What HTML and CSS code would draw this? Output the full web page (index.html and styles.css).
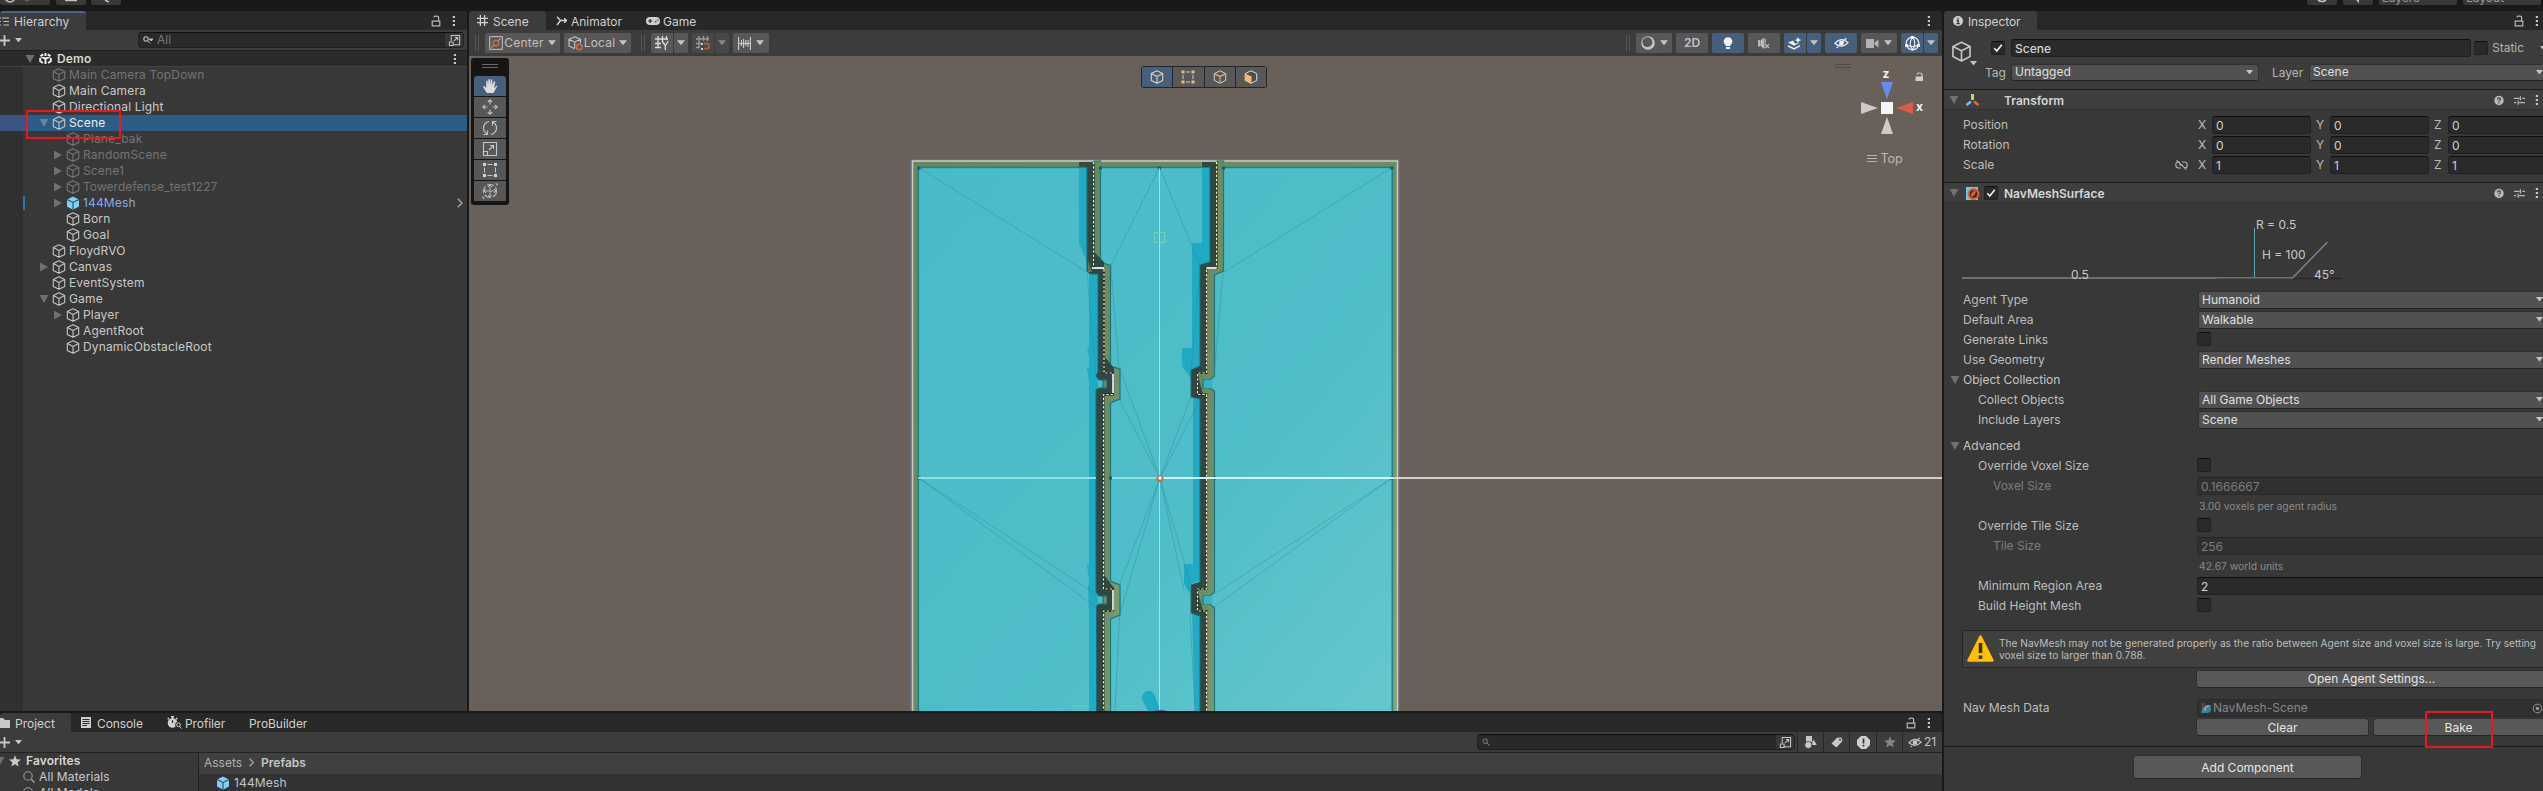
FILE: index.html
```html
<!DOCTYPE html>
<html lang="en">
<head>
<meta charset="utf-8">
<title>Demo - Editor</title>
<link rel="stylesheet" href="styles.css">
</head>
<body>
<svg class="defs" width="0" height="0">
  <symbol id="cube" viewBox="0 0 14 14"><path d="M7 .8 12.7 3.6V10.4L7 13.3 1.3 10.4V3.6ZM1.3 3.6 7 6.5 12.7 3.6M7 6.5V13.3" fill="none" stroke="currentColor" stroke-width="1.1" stroke-linejoin="round"/></symbol>
  <symbol id="prefab" viewBox="0 0 14 14"><path d="M7 .4 13 3.4V10.6L7 13.8 1 10.6V3.4Z" fill="#7fd0f5"/><path d="M1 3.6 7 6.5 13 3.6M7 6.5V13.8" fill="none" stroke="#2f4a5a" stroke-width="1.1"/></symbol>
  <symbol id="down" viewBox="0 0 10 10"><path d="M.6 1H9.4L5 9Z" fill="currentColor"/></symbol>
  <symbol id="right" viewBox="0 0 10 10"><path d="M1 .6V9.4L9 5Z" fill="currentColor"/></symbol>
  <symbol id="drop" viewBox="0 0 8 5"><path d="M0 0H8L4 5Z" fill="currentColor"/></symbol>
  <symbol id="dots" viewBox="0 0 4 12"><path d="M.8 1h2.2v2H.8ZM.8 5h2.2v2H.8ZM.8 9h2.2v2H.8Z" fill="currentColor"/></symbol>
  <symbol id="lock" viewBox="0 0 10 12"><path d="M1.2 6.2H8.8V10.8H1.2ZM7.6 6V2.6Q7.6 1.2 6 1.2H4.4Q3 1.2 3 2.6" fill="none" stroke="currentColor" stroke-width="1.2"/></symbol>
  <symbol id="plus" viewBox="0 0 11 11"><path d="M5.5 0V11M0 5.5H11" stroke="currentColor" stroke-width="1.8"/></symbol>
  <symbol id="expand" viewBox="0 0 14 14"><path d="M3.5 7.5V1.5H12.5V11.5H6M1.5 8.5H5.5V12.5H1.5ZM6.5 7.5 10.3 3.9M7.4 3.7H10.5V6.8" fill="none" stroke="currentColor" stroke-width="1.1"/></symbol>
  <symbol id="mag" viewBox="0 0 10 10"><circle cx="4" cy="4" r="2.7" fill="none" stroke="currentColor" stroke-width="1.3"/><path d="M6 6 9.3 9.3" stroke="currentColor" stroke-width="1.5"/></symbol>
  <symbol id="lens" viewBox="0 0 12 12"><circle cx="5" cy="5" r="4.2" fill="none" stroke="currentColor" stroke-width="1.1"/><path d="M8.2 8.2 11.5 11.5" stroke="currentColor" stroke-width="1.6"/></symbol>
  <symbol id="eyeoff" viewBox="0 0 16 12"><path d="M1 6.4Q7.5-1 15 5.6 8.5 12.5 1 6.4ZM3 11.3 13.2.8" fill="none" stroke="currentColor" stroke-width="1.4"/><circle cx="8" cy="5.9" r="2.6" fill="currentColor"/></symbol>
  <symbol id="star" viewBox="0 0 12 12"><path d="M6 .3 7.6 4.3 11.9 4.6 8.6 7.4 9.7 11.6 6 9.3 2.3 11.6 3.4 7.4.1 4.6 4.4 4.3Z" fill="currentColor"/></symbol>
  <symbol id="help" viewBox="0 0 11 11"><circle cx="5.5" cy="5.5" r="5.2" fill="currentColor"/><path d="M3.8 4.3Q3.8 2.6 5.5 2.6 7.2 2.6 7.2 4.1 7.2 5 5.5 5.8V6.7M5.5 7.5V8.9" fill="none" stroke="#3c3c3c" stroke-width="1.2"/></symbol>
  <symbol id="preset" viewBox="0 0 12 11"><path d="M0 3.2H6M9 3.2H12M0 7.8H2.5M5.5 7.8H12M7 .8V5.6M4.6 5.4V10.2" stroke="currentColor" stroke-width="1.3"/></symbol>
  <symbol id="check" viewBox="0 0 10 10"><path d="M1.3 5.2 3.8 8 8.8 1.8" fill="none" stroke="currentColor" stroke-width="1.7"/></symbol>
  <symbol id="grid" viewBox="0 0 12 12"><path d="M3.7 0V12M8.3 0V12M0 3.7H12M0 8.3H12" stroke="currentColor" stroke-width="1.4"/></symbol>
</svg>

<div class="app">
  <header class="topbar">
    <div class="tb tb-a"><svg width="32" height="3"><circle cx="10" cy="-3" r="5" fill="none" stroke="#c4c4c4" stroke-width="1.6"/><path d="M24 0h6l-3 1.5z" fill="#666"/></svg></div>
    <div class="tb tb-b"><svg width="14" height="3"><path d="M1 0H13" stroke="#c4c4c4" stroke-width="2.4"/></svg></div>
    <div class="tb tb-c"><svg width="10" height="3"><path d="M4 0l4 2" stroke="#c4c4c4" stroke-width="1.5"/></svg></div>
    <div class="tb tb-d"><svg width="12" height="4"><path d="M2 0Q6 3 10 0" fill="none" stroke="#c4c4c4" stroke-width="1.6"/></svg></div>
    <div class="tb tb-e"><svg width="8" height="4"><path d="M2 0l3 3V0" fill="#c4c4c4"/></svg></div>
    <div class="tb tb-f"><span>Layers</span></div>
    <div class="tb tb-g"><span>Layout</span></div>
  </header>

  <div class="work">
    <div class="leftside">
      <div class="upper">
        <section class="hierarchy">
          <div class="tabs">
            <div class="tab on focus tab-hier"><svg width="9" height="9" viewBox="0 0 9 9"><path d="M0 1H1M0 4.5H1M0 8H1M2 1H9M3.5 4.5H9M3.5 8H9" stroke="#c4c4c4" stroke-width="1.1"/></svg><span>Hierarchy</span></div>
            <div class="tabtools"><svg class="i-lock"><use href="#lock"/></svg><svg class="i-dots"><use href="#dots"/></svg></div>
          </div>
          <div class="bar hbar">
            <svg class="i-plus"><use href="#plus"/></svg><svg class="i-drop"><use href="#drop"/></svg>
            <div class="search hsearch"><svg width="10" height="8" viewBox="0 0 10 8"><circle cx="3" cy="3" r="2.2" fill="none" stroke="#c4c4c4" stroke-width="1.1"/><path d="M4.6 4.6 7 7.4M6.4 3H10L8.2 5Z" stroke="#c4c4c4" stroke-width=".9" fill="#c4c4c4"/></svg><span>All</span><div class="sx"><svg><use href="#expand"/></svg></div></div>
          </div>
          <div class="tree">
            <div class="row head"><svg class="ar"><use href="#down"/></svg><svg class="ic white" viewBox="0 0 14 14"><path d="M7 1.2V4.2M7 7.4V13M7 7.4 1.8 4.4M7 7.4 12.2 4.4M1.3 6.5V10L4.3 11.9M12.7 6.5V10L9.7 11.9M1.6 4.4 4.6 2.5M12.4 4.4 9.4 2.5" fill="none" stroke="currentColor" stroke-width="2.1"/></svg><b>Demo</b><svg class="i-dots"><use href="#dots"/></svg></div>
            <div class="row d1 off"><svg class="ar"></svg><svg class="ic"><use href="#cube"/></svg><span>Main Camera TopDown</span></div>
            <div class="row d1"><svg class="ar"></svg><svg class="ic"><use href="#cube"/></svg><span>Main Camera</span></div>
            <div class="row d1"><svg class="ar"></svg><svg class="ic"><use href="#cube"/></svg><span>Directional Light</span></div>
            <div class="row d1 sel"><svg class="ar"><use href="#down"/></svg><svg class="ic"><use href="#cube"/></svg><span>Scene</span><i class="mark mark-scene"></i></div>
            <div class="row d2 off"><svg class="ar"></svg><svg class="ic"><use href="#cube"/></svg><span>Plane_bak</span></div>
            <div class="row d2 off"><svg class="ar"><use href="#right"/></svg><svg class="ic"><use href="#cube"/></svg><span>RandomScene</span></div>
            <div class="row d2 off"><svg class="ar"><use href="#right"/></svg><svg class="ic"><use href="#cube"/></svg><span>Scene1</span></div>
            <div class="row d2 off"><svg class="ar"><use href="#right"/></svg><svg class="ic"><use href="#cube"/></svg><span class="snug">Towerdefense_test1227</span></div>
            <div class="row d2 pre"><svg class="ar"><use href="#right"/></svg><svg class="ic"><use href="#prefab"/></svg><span>144Mesh</span><svg class="open" viewBox="0 0 6 10"><path d="M.8.8 5 5 .8 9.2" fill="none" stroke="#a0a0a0" stroke-width="1.5"/></svg></div>
            <div class="row d2"><svg class="ar"></svg><svg class="ic"><use href="#cube"/></svg><span>Born</span></div>
            <div class="row d2"><svg class="ar"></svg><svg class="ic"><use href="#cube"/></svg><span>Goal</span></div>
            <div class="row d1"><svg class="ar"></svg><svg class="ic"><use href="#cube"/></svg><span>FloydRVO</span></div>
            <div class="row d1"><svg class="ar"><use href="#right"/></svg><svg class="ic"><use href="#cube"/></svg><span>Canvas</span></div>
            <div class="row d1"><svg class="ar"></svg><svg class="ic"><use href="#cube"/></svg><span>EventSystem</span></div>
            <div class="row d1"><svg class="ar"><use href="#down"/></svg><svg class="ic"><use href="#cube"/></svg><span>Game</span></div>
            <div class="row d2"><svg class="ar"><use href="#right"/></svg><svg class="ic"><use href="#cube"/></svg><span>Player</span></div>
            <div class="row d2"><svg class="ar"></svg><svg class="ic"><use href="#cube"/></svg><span>AgentRoot</span></div>
            <div class="row d2"><svg class="ar"></svg><svg class="ic"><use href="#cube"/></svg><span>DynamicObstacleRoot</span></div>
          </div>
        </section>

        <section class="scene">
          <div class="tabs">
            <div class="tab on tab-scene"><svg width="11" height="11"><use href="#grid"/></svg><span>Scene</span></div>
            <div class="tab tab-anim"><svg width="11" height="10" viewBox="0 0 11 10"><path d="M1 .8 4.5 4.5 1 9M4.5 4.5H10.5M8.3 2.4 10.5 4.5 8.3 6.8" fill="none" stroke="#d0d0d0" stroke-width="1.5"/></svg><span>Animator</span></div>
            <div class="tab tab-game"><svg width="14" height="8" viewBox="0 0 14 8"><rect width="14" height="8" rx="4" fill="#d0d0d0"/><path d="M2.2 4H6.2M4.2 2V6M9 4.6h1.5M11 3h1.5" stroke="#282828" stroke-width="1.2"/></svg><span>Game</span></div>
            <div class="tabtools"><svg class="i-dots"><use href="#dots"/></svg></div>
          </div>
          <div class="bar sbar">
            <i class="grip"></i>
            <div class="btn w75"><svg width="14" height="14" viewBox="0 0 14 14"><path d="M.7.7H13.3V13.3H.7ZM2.5 11.5 5 9M9 5 11.5 2.5" fill="none" stroke="#c8c8c8"/><circle cx="7" cy="7" r="2.8" fill="none" stroke="#d9683f" stroke-width="1.4"/></svg><span>Center</span><svg class="i-drop big"><use href="#drop"/></svg></div>
            <div class="btn w67"><svg width="15" height="15" viewBox="0 0 15 15"><path d="M6.7.8 12.5 3.3V7M6.7 12.7 1 10V3.3L6.7.8M1 3.3 6.7 6 12.5 3.3M6.7 6V12" fill="none" stroke="#c8c8c8" stroke-width="1.1"/><circle cx="11.3" cy="11" r="2.8" fill="none" stroke="#d9683f" stroke-width="1.4"/></svg><span>Local</span><svg class="i-drop big"><use href="#drop"/></svg></div>
            <i class="grip g2"></i>
            <div class="btn w22"><svg width="14" height="14" viewBox="0 0 14 14"><path d="M3 0V12M7.5 0V5M11.5 0V4M0 3H13M0 7.5H6M0 11.5H6M7 5 10.3 9.5 13.3 5M10.3 9.5V14" fill="none" stroke="#dadada" stroke-width="1.3"/></svg></div>
            <div class="btn w14"><svg class="i-drop big"><use href="#drop"/></svg></div>
            <div class="btn w22 dis"><svg width="14" height="14" viewBox="0 0 14 14"><path d="M3 0V12M7.5 0V5M11.5 0V5M0 3H13M0 7.5H6M0 11.5H4" fill="none" stroke="#999" stroke-width="1.3"/><path d="M8 7.5H10.5Q13 7.5 13 10 13 12.6 10.5 12.6H8" fill="none" stroke="#a85f48" stroke-width="1.8"/><path d="M5 7h2v2H5ZM5 12h2v2H5Z" fill="#ccc"/></svg></div>
            <div class="btn w14 dis"><svg class="i-drop big dim"><use href="#drop"/></svg></div>
            <div class="btn w36"><svg width="13" height="13" viewBox="0 0 13 13"><path d="M.6 0V13M12.4 0V13M0 6.5H13M3.4 3V9M5.6 2V11M7.8 3V9M10 3V10" stroke="#cecece" stroke-width="1.1"/></svg><svg class="i-drop big"><use href="#drop"/></svg></div>
            <i class="grip g3"></i>
            <div class="btn w36"><svg width="14" height="14" viewBox="0 0 14 14"><circle cx="7" cy="7" r="6.8" fill="#c4c4c4"/><circle cx="6.400" cy="6.200" r="4.900" fill="#575757"/></svg><svg class="i-drop big"><use href="#drop"/></svg></div>
            <div class="btn w32"><b>2D</b></div>
            <div class="btn w32 blue"><svg width="10" height="13" viewBox="0 0 10 13"><path d="M5 .3A4.2 4.2 0 0 1 7.4 8V9H2.6V8A4.2 4.2 0 0 1 5 .3M3 10H7V12H3Z" fill="#f0f0f0"/></svg></div>
            <div class="btn w32"><svg width="12" height="11" viewBox="0 0 12 11"><path d="M0 2.5H2V8H0ZM3 2.5 6 0V10.5L3 8ZM7.5 1V5" fill="#bbb" stroke="#bbb" stroke-width=".8"/><path d="M7 6 11 10M11 6 7 10" stroke="#bbb" stroke-width="1.1"/></svg></div>
            <div class="btn w22 blue"><svg width="14" height="13" viewBox="0 0 14 13"><path d="M0 5.5 5 3.5 7 6.5 11.5 6 6 8.8ZM0 8 6 11 12 8V9.5L6 12.7 0 9.7Z" fill="#eee"/><path d="M10 0 11 2.2 13.5 3 11 4 10 6 9 4 6.8 3 9 2.2Z" fill="#fff"/></svg></div>
            <div class="btn w14 blue"><svg class="i-drop big"><use href="#drop"/></svg></div>
            <div class="btn w32 blue"><svg width="15" height="12" class="lt"><use href="#eyeoff"/></svg></div>
            <div class="btn w36"><svg width="13" height="9" viewBox="0 0 13 9"><path d="M0 0H8V9H0ZM8.5 3.5 12.5.5V8.5L8.5 5.5Z" fill="#b4b4b4"/></svg><svg class="i-drop big"><use href="#drop"/></svg></div>
            <div class="btn w22 blue"><svg width="15" height="15" viewBox="0 0 15 15"><circle cx="7.5" cy="7.5" r="6.3" fill="none" stroke="#eee" stroke-width="1.2"/><path d="M7.5 1Q3 7 7.5 14 12 7 7.5 1M1.5 9Q7.5 12 13.5 9" fill="none" stroke="#eee" stroke-width="1.1"/><path d="M6 0h3v3H6ZM0 8h3v3H0ZM12 8h3v3h-3Z" fill="#fff"/></svg></div>
            <div class="btn w14 blue last"><svg class="i-drop big"><use href="#drop"/></svg></div>
          </div>

          <div class="view">
            <svg class="mesh" viewBox="469 56 1473 655">
              <defs>
                <linearGradient id="sea" x1="0" y1="0" x2="1" y2="1"><stop offset="0" stop-color="#49bbc8"/><stop offset=".6" stop-color="#4fbec9"/><stop offset="1" stop-color="#68c7ce"/></linearGradient>
                <linearGradient id="grass" x1="0" y1="0" x2="1" y2="1"><stop offset="0" stop-color="#67885f"/><stop offset=".6" stop-color="#6d8e66"/><stop offset="1" stop-color="#86a479"/></linearGradient>
              </defs>
              <rect x="911" y="159.5" width="488" height="560" fill="none" stroke="#5d6f94" stroke-width="1.2"/>
              <rect x="912.5" y="161" width="485" height="560" fill="url(#grass)" stroke="#c9c9c4" stroke-width="1.6"/>
              <rect x="918.3" y="167.4" width="474" height="560" fill="url(#sea)" stroke="#1f8189" stroke-width="1.6"/>
              <!-- cast shadows on the water -->
              <g fill="#1fabc4">
                <path d="M1079 168H1087V262L1079 243Z"/>
                <path d="M1089 274H1098V720H1089V610L1088 585H1089V580L1087 565H1089V382L1087 368H1089V356L1087 348H1089Z"/>
                <path d="M1202 168H1211V262L1200 272V368L1192 372V380L1182 366V348H1192V243H1202Z"/>
                <path d="M1193 396H1201V580L1190 584V594L1184 584V564H1193ZM1192 612H1201V720H1195Z"/>
                <path d="M1143 701A6.500 6.500 0 1 1 1154 694L1161 711H1148Z"/>
              </g>
              <!-- left wall -->
              <path d="M1094 161H1100.500V262L1110.500 265.500V366L1120 369V399L1110.500 403V581L1120 585V615L1110.500 619V720H1103V268H1094Z" fill="url(#grass)" stroke="#1f7479" stroke-width="1.2"/>
              <path d="M1079 162H1094V167H1079Z" fill="#354b43"/>
              <path d="M1087 167H1094V252L1104 262V356L1114 368V395H1104V575L1114 588V612H1104V720H1096.500V606L1099 604H1107V596H1099L1096 592V390L1099 388H1107V380H1099L1096 376 1098 372V274H1090L1087 271Z" fill="#2f4844"/>
              <path d="M1087 167V271L1090 274H1098V372L1096 376 1099 380H1107V388H1099L1096 390V592L1099 596H1107V604H1099L1096.500 606V711" fill="none" stroke="#1d6a70" stroke-width="1"/>
              <path d="M1088 260 1092 272H1088Z" fill="#5e7450"/>
              <rect x="1094.500" y="161.800" width="7" height="6" fill="#69895f"/>
              <!-- right wall -->
              <path d="M1217 161H1223.500V271L1214.500 275V376L1210 380H1203V388H1210L1214.500 391V592L1210 596H1203V604H1210L1214.500 608V720H1206V612L1197 609V590L1206 586V396L1197 394V373L1206 368V268L1217 266Z" fill="url(#grass)" stroke="#1f7479" stroke-width="1.2"/>
              <rect x="1217.500" y="161.800" width="7" height="6" fill="#69895f"/>
              <path d="M1202 162H1217V268H1206.500V373H1197L1203 394H1206.500V589H1197L1203 611H1206.500V720H1200V616L1191 613V585L1200 582V399L1191 397V370L1200 366V265L1210 262V167H1202Z" fill="#2f4844"/>
              <path d="M1210 167V262L1200 265V366L1191 370V397L1200 399V582L1191 585V613L1200 616V711" fill="none" stroke="#1d6a70" stroke-width="1"/>
              <path d="M1204 380H1212V388H1204ZM1204 596H1212V604H1204Z" fill="#37b3c4"/>
              <g fill="none" stroke="#16211f" stroke-width="1.800">
                <path d="M1093.500 162V268H1104V373H1113V394.500H1103.500V589H1113V611H1103.500V711"/>
                <path d="M1216.500 162V268H1206.500V373H1197.500V394.500H1206.500V589H1197.500V611H1206.500V711"/>
              </g>
              <g fill="none" stroke="#f2e6b4" stroke-width="1.200" stroke-dasharray="2.600 1.600">
                <path d="M1093.500 162V268H1104V373H1113V394.500H1103.500V589H1113V611H1103.500V711"/>
                <path d="M1216.500 162V268H1206.500V373H1197.500V394.500H1206.500V589H1197.500V611H1206.500V711"/>
              </g>
              <path d="M1092 268H1104.500M1113 374V393M1113 590V610M1206.500 268H1216" stroke="#e4dcdc" stroke-width="1.800"/>
              <path d="M1207.800 275V372M1207.800 396V588M1207.800 612V711" stroke="#8a8298" stroke-width="1"/>
              <!-- triangulation -->
              <g fill="none" stroke="#218c99" stroke-opacity=".42" stroke-width="1">
                <path d="M918.500 167.500 1087 272M1392 167.500 1224 272M1159.500 167.500 1110.500 266M1159.500 167.500 1200 265M1111 268 1119 369M1087 272 1096 375M1223 272 1214 376M1119.500 369 1160 478M1119.500 400 1160 478M1191 397 1160 478M1200 400 1160 478M1200 270 1191 370"/>
                <path d="M918.500 478 1096 594M918.500 478 1096 607M1392 478 1214 594M1392 478 1214 607M1160 478 1119.500 585M1160 478 1119.500 615M1160 478 1191 586M1160 478 1184 590M1119.500 616 1115 711M1190 614 1195 711"/>
              </g>
              <g fill="#145f66"><path d="M917.500 166.500h3v3h-3zM1390.500 166.500h3v3h-3zM1158 166.500h3v3h-3zM1099 166.500h3v3h-3zM1222 166.500h3v3h-3zM917.500 476.500h3v3h-3zM1390.500 476.500h3v3h-3zM1109 476.500h3v3h-3zM1213 476.500h3v3h-3z"/></g>
              <path d="M1159.500 168V711" stroke="#b9edec" stroke-opacity=".75" stroke-width="1"/>
              <path d="M918 478H1096M1112 478H1160" stroke="#8fe0e2" stroke-width="1.800"/>
              <path d="M1160 478H1393" stroke="#c9f6f4" stroke-width="2"/>
              <path d="M1393 478H1942" stroke="#d3d1c9" stroke-width="2"/>
              <rect x="1154.500" y="232.500" width="10" height="10" fill="none" stroke="#6fd3bd" stroke-width="1"/>
              <circle cx="1160" cy="478.500" r="3.500" fill="#c4694d"/><circle cx="1160" cy="478" r="1.700" fill="#fff"/>
              <path d="M1155 710.500h10" stroke="#55639a" stroke-width="1"/>
              <!-- orientation gizmo -->
              <path d="M1835 64.500H1851M1835 67.500H1851" stroke="#524c48" stroke-width="1"/>
              <path d="M1881 82H1893L1887 99Z" fill="#668cf0"/>
              <path d="M1861 102V114L1878 108Z" fill="#cdcbc9"/>
              <path d="M1896 108 1913 102V114Z" fill="#dd5949"/>
              <path d="M1887 117 1893 134H1881Z" fill="#cdcbc9"/>
              <rect x="1881" y="102" width="12" height="12" fill="#f5f5f5"/>
              <text x="1882.500" y="77.500" class="ax">z</text><text x="1916" y="111" class="ax">x</text>
              <path d="M1915.500 76.500H1923V81H1915.500Z" fill="#d0cecb"/><path d="M1917 74.500Q1917 73 1919.500 73 1922 73 1922 75V77" fill="none" stroke="#d0cecb" stroke-width="1.100"/>
              <path d="M1867 155.500H1877M1867 158.500H1877M1867 161.500H1877" stroke="#b9b4b0" stroke-width="1"/>
              <text x="1880.500" y="163" class="top">Top</text>
            </svg>
            <div class="tools">
              <i></i>
              <div class="tool blue"><svg viewBox="0 0 16 16"><path d="M5 15Q2.500 12 1 8.500L2.200 8 4.200 10V3Q5 2 5.600 3L6 7 6.400 1.500Q7.200.5 8 1.500V7L9 1.500Q9.800.8 10.400 1.800L10.200 7.500 12 3.300Q13 2.800 13.300 3.800L12 10.500 14.500 7.500Q15.500 7.600 15 8.500L11.500 15Z" fill="#dcdcdc"/></svg></div>
              <div class="tool"><svg viewBox="0 0 16 16"><path d="M8 1V5.500M8 10.500V15M1 8H5.500M10.500 8H15M5.800 3 8 .8 10.200 3M5.800 13 8 15.200 10.200 13M3 5.800.8 8 3 10.200M13 5.800 15.200 8 13 10.200" fill="none" stroke="#bdbdbd" stroke-width="1.200"/></svg></div>
              <div class="tool"><svg viewBox="0 0 16 16"><path d="M5.500 14Q1.500 12 1.500 8 1.500 3 7 1.500M10.500 2Q14.500 4 14.500 8 14.500 13 9 14.500M10.500 5.500V1.500H14.500M5.500 10.500V14.500H1.500" fill="none" stroke="#c6c6c6" stroke-width="1.200"/></svg></div>
              <div class="tool"><svg viewBox="0 0 16 16"><path d="M1.500 1.500H14.500V14.500H1.500ZM1.500 10.500H5.500V14.500M7 9 11.500 4.500M8 4.500H11.500V8" fill="none" stroke="#c6c6c6" stroke-width="1.100"/></svg></div>
              <div class="tool"><svg viewBox="0 0 16 16"><path d="M1 1h3v3H1zM12 1h3v3h-3zM1 12h3v3H1zM12 12h3v3h-3z" fill="#d4d4d4"/><path d="M5.500 2.500H10.500M5.500 13.500H10.500M2.500 5.500V10.500M13.500 5.500V10.500" stroke="#c6c6c6"/></svg></div>
              <div class="tool"><svg viewBox="0 0 16 16"><circle cx="8" cy="8" r="6.500" fill="none" stroke="#b8b8b8" stroke-width="1.200" stroke-dasharray="7 2"/><path d="M8 2V14M2 8H14M6 4 8 2 10 4M6 12 8 14 10 12M4 6 2 8 4 10M12 6 14 8 12 10" fill="none" stroke="#b8b8b8"/><path d="M13 .5h2.500V3zM.5 13v2.500H3z" fill="#c4c4c4"/></svg></div>
            </div>
            <div class="modes">
              <div class="mode blue"><svg class="tan"><use href="#cube"/></svg></div>
              <div class="mode"><svg viewBox="0 0 14 14"><path d="M5 2H9M5 12H9M2 5V9M12 5V9" stroke="#ccc"/><path d="M.5.500h3v3h-3zM10.500.500h3v3h-3zM.5 10.500h3v3h-3zM10.500 10.500h3v3h-3z" fill="#f3b877"/></svg></div>
              <div class="mode"><svg viewBox="0 0 14 14"><path d="M1.300 3.600V10.400L7 13.300 12.700 10.400V3.600" fill="none" stroke="#ccc"/><path d="M7 .8 12.700 3.600 7 6.500 1.300 3.600Z" fill="none" stroke="#ccc"/><path d="M1.300 3.600 7 6.500 12.700 3.600M7 6.500V13" fill="none" stroke="#e0a468" stroke-width="1.200"/></svg></div>
              <div class="mode"><svg viewBox="0 0 14 14"><path d="M7 .8 12.700 3.600V10.400L7 13.300 1.300 10.400V3.600Z" fill="#4d4d4d" stroke="#ddd"/><path d="M.8 3.500 7.500 6.500V13.800L.8 10.600Z" fill="#f9b66d"/></svg></div>
            </div>
          </div>
        </section>
      </div>

      <section class="project">
        <div class="tabs">
          <div class="tab on tab-proj"><svg width="10" height="10" viewBox="0 0 10 10"><path d="M0 0H3L5 2H10V10H0Z" fill="#c8c8c8"/></svg><span>Project</span></div>
          <div class="tab tab-cons"><svg width="10" height="11" viewBox="0 0 10 11"><rect width="10" height="11" fill="#cfcfcf"/><path d="M1.500 2.500H8.500M1.500 4.500H8.500M1.500 6.500H8.500M1.500 8.500H6" stroke="#282828"/></svg><span>Console</span></div>
          <div class="tab tab-prof"><svg width="15" height="13" viewBox="0 0 15 13"><circle cx="5.500" cy="7" r="4.800" fill="#cfcfcf"/><path d="M4 .8H7M5.500 1V3M9 2l1.300 1.300M1.900 2 .8 3.200" stroke="#cfcfcf" stroke-width="1.500"/><path d="M5.500 7V4.200" stroke="#282828" stroke-width="1.200"/><circle cx="11.500" cy="9" r="3.300" fill="#282828"/><circle cx="11.500" cy="8.800" r="1.900" fill="none" stroke="#cfcfcf"/><path d="M12.500 10.500 14.500 12.500" stroke="#cfcfcf"/></svg><span>Profiler</span></div>
          <div class="tab tab-pb"><span>ProBuilder</span></div>
          <div class="tabtools"><svg class="i-lock"><use href="#lock"/></svg><svg class="i-dots"><use href="#dots"/></svg></div>
        </div>
        <div class="bar pbar">
          <svg class="i-plus"><use href="#plus"/></svg><svg class="i-drop"><use href="#drop"/></svg>
          <div class="search psearch"><svg width="8" height="8"><use href="#mag"/></svg><div class="sx"><svg><use href="#expand"/></svg></div></div>
          <div class="pb w25"><svg width="13" height="13" viewBox="0 0 13 13"><path d="M2 0H8V6H2Z" fill="#c8c8c8"/><circle cx="4.300" cy="9" r="3.600" fill="#c8c8c8" stroke="#3c3c3c" stroke-width=".8"/><path d="M9.500 3.500 12.800 9H8.200V6.800Z" fill="#c8c8c8"/></svg></div>
          <div class="pb w26"><svg width="12" height="11" viewBox="0 0 12 11"><path d="M.5 6.500 6 .8 10.500.5 11.500 4 5.500 10.500Z" fill="#c8c8c8"/><circle cx="9" cy="2.800" r="1" fill="#3c3c3c"/></svg></div>
          <div class="pb w27"><svg width="13" height="13" viewBox="0 0 13 13"><path d="M4 0H9L13 4V9L9 13H4L0 9V4Z" fill="#cfcfcf"/><path d="M6.500 2.500V7.500M6.500 8.800V10.600" stroke="#333" stroke-width="1.700"/></svg></div>
          <div class="pb w26b"><svg width="12" height="12" class="dim"><use href="#star"/></svg></div>
          <div class="pb rest"><svg width="14" height="11"><use href="#eyeoff"/></svg><span>21</span></div>
        </div>
        <div class="pbody">
          <div class="favs">
            <div class="fav"><svg class="ar"><use href="#down"/></svg><svg width="12" height="12"><use href="#star"/></svg><b>Favorites</b></div>
            <div class="fav sub"><svg class="fm"><use href="#lens"/></svg><span>All Materials</span></div>
            <div class="fav sub"><svg class="fm"><use href="#lens"/></svg><span>All Models</span></div>
          </div>
          <div class="assets">
            <div class="crumbs"><span>Assets</span><svg width="5" height="9" viewBox="0 0 5 9"><path d="M.7.700 4.300 4.500.7 8.300" fill="none" stroke="#a0a0a0" stroke-width="1.300"/></svg><b>Prefabs</b></div>
            <div class="asset"><svg width="14" height="14"><use href="#prefab"/></svg><span>144Mesh</span></div>
          </div>
        </div>
      </section>
    </div>

    <section class="inspector">
      <div class="tabs">
        <div class="tab on tab-insp"><svg width="10" height="10" viewBox="0 0 10 10"><circle cx="5" cy="5" r="5" fill="#cfcfcf"/><path d="M5 1.800V3.300M3.700 4.500H5.200V7.500M3.500 7.700H6.700" stroke="#333" stroke-width="1.300" fill="none"/></svg><span>Inspector</span></div>
        <div class="tabtools"><svg class="i-lock"><use href="#lock"/></svg><svg class="i-dots"><use href="#dots"/></svg></div>
      </div>
      <div class="ohead">
        <div class="bigcube"><svg width="21" height="21"><use href="#cube"/></svg><svg class="i-drop"><use href="#drop"/></svg></div>
        <div class="olines">
          <div class="oline"><div class="cb c1"><svg><use href="#check"/></svg></div><div class="field name">Scene</div><div class="cb"></div><span class="st">Static</span><svg class="i-drop"><use href="#drop"/></svg></div>
          <div class="oline l2"><label>Tag</label><div class="dd tag"><span>Untagged</span><svg class="i-drop"><use href="#drop"/></svg></div><label class="lay">Layer</label><div class="dd layer"><span>Scene</span><svg class="i-drop"><use href="#drop"/></svg></div></div>
        </div>
      </div>

      <div class="chead"><svg class="ar"><use href="#down"/></svg><svg class="cic" width="13" height="13" viewBox="0 0 13 13"><path d="M6.500 0V6" stroke="#b5e853" stroke-width="2.800"/><path d="M5 7.500.5 11" stroke="#6ec1ea" stroke-width="2.600"/><path d="M8 7.500 12.500 11" stroke="#e0663c" stroke-width="2.600"/></svg><b>Transform</b><div class="cright"><svg class="i-help"><use href="#help"/></svg><svg class="i-pre"><use href="#preset"/></svg><svg class="i-dots"><use href="#dots"/></svg></div></div>
      <div class="xform">
        <div class="vec"><label>Position</label><em></em><s>X</s><div class="field">0</div><s>Y</s><div class="field">0</div><s>Z</s><div class="field">0</div></div>
        <div class="vec"><label>Rotation</label><em></em><s>X</s><div class="field">0</div><s>Y</s><div class="field">0</div><s>Z</s><div class="field">0</div></div>
        <div class="vec"><label>Scale</label><em><svg width="13" height="10" viewBox="0 0 13 10"><path d="M5 2H3.500Q.8 2 .8 5 .8 8 3.500 8H6M7 2H9.500Q12.200 2 12.200 5 12.200 8 9.500 8M1.500.3 11.500 9.700M4 5H8" fill="none" stroke="#b4b4b4" stroke-width="1.100"/></svg></em><s>X</s><div class="field">1</div><s>Y</s><div class="field">1</div><s>Z</s><div class="field">1</div></div>
      </div>

      <div class="chead"><svg class="ar"><use href="#down"/></svg><svg class="cic nav" width="14" height="13" viewBox="0 0 14 13"><path d="M0 0H12V13H0Z" fill="#7ac5e6"/><circle cx="7.500" cy="7" r="6" fill="#dd6034"/><circle cx="7.500" cy="7" r="3.800" fill="#3c2a26"/><path d="M4.800 10Q4.500 5 9.500 3.300 10.500 8.500 4.800 10" fill="#dd6034"/></svg><div class="cb c2"><svg><use href="#check"/></svg></div><b>NavMeshSurface</b><div class="cright"><svg class="i-help"><use href="#help"/></svg><svg class="i-pre"><use href="#preset"/></svg><svg class="i-dots"><use href="#dots"/></svg></div></div>
      <svg class="agent" viewBox="1944 203 599 87">
        <path d="M1962 278H2292" stroke="#6f6f6f" stroke-width="2"/><path d="M2217 278.500H2292" stroke="#555" stroke-width="1"/>
        <path d="M2292 278.500H2342" stroke="#292929" stroke-width="1.500"/>
        <path d="M2292 278.500 2327.500 242" stroke="#808080" stroke-width="1.500"/>
        <path d="M2254.500 228V277" stroke="#5da3b5" stroke-width="1"/>
        <text x="2256" y="228.500">R = 0.5</text><text x="2262" y="258.500">H = 100</text><text x="2071" y="278.500">0.5</text><text x="2314" y="278.500">45°</text>
      </svg>
      <div class="props">
        <div class="p"><label>Agent Type</label><div class="dd"><span>Humanoid</span><svg class="i-drop"><use href="#drop"/></svg></div></div>
        <div class="p"><label>Default Area</label><div class="dd"><span>Walkable</span><svg class="i-drop"><use href="#drop"/></svg></div></div>
        <div class="p"><label>Generate Links</label><div class="cb"></div></div>
        <div class="p"><label>Use Geometry</label><div class="dd"><span>Render Meshes</span><svg class="i-drop"><use href="#drop"/></svg></div></div>
        <div class="p fold"><svg class="ar"><use href="#down"/></svg><label>Object Collection</label></div>
        <div class="p in1"><label>Collect Objects</label><div class="dd"><span>All Game Objects</span><svg class="i-drop"><use href="#drop"/></svg></div></div>
        <div class="p in1"><label>Include Layers</label><div class="dd"><span>Scene</span><svg class="i-drop"><use href="#drop"/></svg></div></div>
        <div class="p fold adv"><svg class="ar"><use href="#down"/></svg><label>Advanced</label></div>
        <div class="p in1"><label>Override Voxel Size</label><div class="cb"></div></div>
        <div class="p in2"><label>Voxel Size</label><div class="field">0.1666667</div></div>
        <div class="p hint"><label></label><small>3.00 voxels per agent radius</small></div>
        <div class="p in1"><label>Override Tile Size</label><div class="cb"></div></div>
        <div class="p in2"><label>Tile Size</label><div class="field">256</div></div>
        <div class="p hint"><label></label><small>42.67 world units</small></div>
        <div class="p in1"><label>Minimum Region Area</label><div class="field">2</div></div>
        <div class="p in1"><label>Build Height Mesh</label><div class="cb"></div></div>
      </div>
      <div class="warn"><svg width="27" height="28" viewBox="0 0 27 28"><path d="M13.500 1.500 25.500 25.500H1.500Z" fill="#ffc107" stroke="#ffc107" stroke-width="2.500" stroke-linejoin="round"/><path d="M13.500 8V18M13.500 20.500V24" stroke="#3a3320" stroke-width="3.600"/></svg><p>The NavMesh may not be generated properly as the ratio between Agent size and voxel size is large. Try setting<br>voxel size to larger than 0.788.</p></div>
      <div class="b-open"><div class="button">Open Agent Settings...</div></div>
      <div class="p data"><label>Nav Mesh Data</label><div class="field obj"><svg width="10" height="10" viewBox="0 0 10 10"><path d="M2 2H10V8L7 10H0Z" fill="#3f7f9c"/><path d="M0 0h4v4H0z" fill="#6a3b36"/><path d="M4 8V5L8 2.500" stroke="#a8d0e0" fill="none"/></svg><span>NavMesh-Scene</span><svg class="pick" viewBox="0 0 11 11"><circle cx="5.500" cy="5.500" r="4.300" fill="none" stroke="#999"/><circle cx="5.500" cy="5.500" r="1.700" fill="#999"/></svg></div></div>
      <div class="b-pair"><div class="button">Clear</div><div class="button">Bake<i class="mark mark-bake"></i></div></div>
      <div class="foot"><div class="button">Add Component</div></div>
    </section>
  </div>
</div>
</body>
</html>
```

FILE: styles.css
```css
* { box-sizing: border-box; }
body { margin: 0; background: #191919; color: #c4c4c4; font: 12px/16px Inter, "Liberation Sans", sans-serif; overflow: hidden; }
svg { display: block; flex: none; }
span, label, b, small { white-space: pre; }
b { font-weight: 600; color: #d6d6d6; }
.defs { position: absolute; }
.app { width: 2543px; height: 791px; display: flex; flex-direction: column; overflow: hidden; }

.topbar { height: 11px; flex: none; display: flex; }
.tb { height: 5px; background: #383838; overflow: hidden; display: flex; justify-content: center; border-radius: 0 0 2px 2px; flex: none; }
.tb-a { width: 50px; justify-content: flex-start; }
.tb-b { width: 30px; margin-left: 6px; }
.tb-c { width: 30px; margin-left: 5px; }
.tb-d { width: 30px; margin-left: 2186px; }
.tb-e { width: 30px; margin-left: 6px; }
.tb-f { width: 78px; margin-left: 6px; }
.tb-g { width: 78px; margin-left: 6px; }
.tb-f, .tb-g { justify-content: flex-start; padding-left: 3px; color: #999; align-items: flex-end; line-height: 16px; }
.tb-f span, .tb-g span { height: 16px; margin-bottom: -1px; }

.work { flex: 1; display: flex; gap: 2px; min-height: 0; }
.leftside { width: 1942px; flex: none; display: flex; flex-direction: column; gap: 2px; }
.upper { height: 700px; display: flex; gap: 2px; }

.tabs { height: 19px; flex: none; display: flex; background: #282828; border-radius: 3px 3px 0 0; overflow: hidden; }
.tab { height: 19px; display: flex; align-items: center; color: #d0d0d0; flex: none; }
.tab span { position: relative; top: 1px; }
.tab.on { background: #3c3c3c; border-radius: 3px 3px 0 0; }
.tab.focus { border-top: 2px solid #45678a; }
.tab.focus span { top: 0; }
.tabtools { margin-left: auto; display: flex; align-items: center; height: 19px; gap: 11px; padding-right: 11px; }
.tab-hier { width: 86px; gap: 5px; letter-spacing: .05px; }
.tab-scene { width: 77px; padding-left: 8px; gap: 5px; }
.tab-anim { width: 90px; padding-left: 10px; gap: 4px; }
.tab-game { padding-left: 10px; gap: 3px; }
.tab-proj { width: 71px; gap: 5px; }
.tab-cons { width: 86px; padding-left: 10px; gap: 6px; letter-spacing: -.1px; }
.tab-prof { width: 83px; padding-left: 10px; gap: 3px; letter-spacing: -.1px; }
.tab-pb { padding-left: 9px; letter-spacing: -.05px; }
.tab-insp { width: 93px; padding-left: 9px; gap: 5px; }
.tab-insp span { letter-spacing: -.1px; }

.i-dots { width: 4px; height: 12px; color: #c8c8c8; }
.i-lock { width: 10px; height: 12px; color: #b8b8b8; }
.i-plus { width: 11px; height: 11px; color: #c8c8c8; }
.i-drop { width: 7px; height: 4.5px; color: #c4c4c4; }
.i-drop.big { width: 8px; height: 5.5px; }
.i-drop.dim { color: #888; }
.i-help { width: 10px; height: 11px; color: #b8b8b8; }
.i-pre { width: 11px; height: 11px; color: #b8b8b8; }

.bar { background: #3c3c3c; display: flex; align-items: center; flex: none; }
.search { height: 16px; display: flex; align-items: center; background: #292929; border: 1px solid #202020; border-top-color: #0f0f0f; border-radius: 4px; overflow: hidden; color: #777; flex: none; }
.sx { margin-left: auto; width: 18px; height: 14px; display: flex; align-items: center; justify-content: center; background: #373737; color: #c4c4c4; }
.sx svg { width: 13px; height: 13px; }

.hierarchy { width: 467px; flex: none; display: flex; flex-direction: column; }
.hbar { height: 20px; }
.hbar .i-plus, .pbar .i-plus { margin-left: -1px; }
.hbar .i-drop, .pbar .i-drop { margin-left: 5px; }
.hsearch { width: 326px; margin-left: 116px; padding-left: 4px; gap: 4px; }

.tree { flex: 1; background: linear-gradient(90deg, #303030 23px, #383838 23px); border-top: 1px solid #202020; }
.row { height: 16px; display: flex; align-items: center; position: relative; color: #c8c8c8; letter-spacing: .16px; }
.row.head { padding-left: 24px; background: #2b2b2b; border-bottom: 1px solid #424242; }
.row.head b { margin-left: 5px; }
.row.head .i-dots { margin-left: auto; margin-right: 10px; }
.row .snug { letter-spacing: .05px; }
.d1 { padding-left: 38px; }
.d2 { padding-left: 52px; }
.ar { width: 10px; height: 10px; margin: 0 2.500px 0 .500px; color: #707070; }
.ic { width: 14px; height: 14px; margin-left: 1px; color: #c4c4c4; }
.ic.white { color: #f0f0f0; width: 13px; height: 13px; margin-left: 2px; }
.row span { margin-left: 3px; }
.off { color: #747474; }
.off .ic { color: #777; }
.sel { background: linear-gradient(90deg, #3b5486 23px, #2c5d87 23px); color: #eee; }
.sel .ar { color: #6a829a; }
.pre { color: #8aaae4; }
.pre::before { content: ""; position: absolute; left: 23px; top: 1px; width: 2px; height: 14px; background: #1f7cb0; }
.open { width: 6px; height: 10px; margin-left: auto; margin-right: 4px; }
.mark { position: absolute; border: 2px solid #ec1620; z-index: 5; }
.mark-scene { left: 26px; top: -5px; width: 95px; height: 29px; }

.scene { width: 1473px; display: flex; flex-direction: column; }
.sbar { height: 26px; padding-left: 6px; }
.grip { width: 4px; height: 16px; border: 1px solid #565656; border-width: 0 1px; margin-right: 6px; }
.g2 { margin-left: 6px; }
.g3 { margin-left: auto; }
.btn { height: 20px; margin-right: 4px; background: #575757; border-radius: 2px; display: flex; align-items: center; justify-content: center; color: #c0c0c0; flex: none; }
.btn span { letter-spacing: .2px; }
.btn b { color: #c4c4c4; }
.w75 { width: 75px; gap: 1px; } .w67 { width: 67px; gap: 1px; }
.w75 .i-drop { margin-left: 3px; }
.w67 .i-drop { margin-left: 3px; }
.w36 { width: 36px; gap: 5px; } .w32 { width: 32px; } .w14 { width: 14px; } .w22 { width: 22px; margin-right: 1px; border-radius: 2px 0 0 2px; }
.btn.dis { background: #484848; }
.blue { background: #46607c; }
.lt { color: #eee; }
.view { flex: 1; position: relative; background: #69605a; overflow: hidden; }
.mesh { width: 1473px; height: 655px; }
.ax { font: 700 12px Inter, sans-serif; fill: #f0f0f0; }
.top { font: 12.500px Inter, sans-serif; fill: #bdb8b4; }
.tools { position: absolute; left: 2px; top: 2px; width: 38px; height: 147px; background: #161514; border-radius: 3px; padding: 6px 3px 0; display: flex; flex-direction: column; gap: 1px; }
.tools > i { height: 4px; flex: none; margin: 0 8px 7px; border: 1px solid #6a6a6a; border-width: 1px 0; }
.tool { height: 20px; background: #575757; display: flex; align-items: center; justify-content: center; flex: none; }
.tool svg { width: 16px; height: 16px; }
.tool.blue { background: #46607c; border-radius: 3px 3px 0 0; }
.modes { position: absolute; left: 672px; top: 10px; width: 126px; height: 22px; background: #252525; border-radius: 3px; padding: 1px; display: flex; gap: 1px; }
.mode { flex: 1; background: #585858; display: flex; align-items: center; justify-content: center; }
.mode svg { width: 14px; height: 14px; }
.mode.blue { background: #46607c; }
.tan { color: #e0d2bc; }

.project { height: 78px; flex: none; display: flex; flex-direction: column; }
.pbar { height: 20px; }
.psearch { width: 318px; margin-left: 1455px; padding-left: 4px; }
.pb { height: 20px; display: flex; align-items: center; justify-content: center; border-left: 1px solid #262626; color: #c4c4c4; }
.w25 { width: 26px; margin-left: 2px; } .w26 { width: 26px; } .w27 { width: 27px; } .w26b { width: 26px; }
.rest { flex: 1; gap: 2px; justify-content: flex-start; padding-left: 5px; }
.dim { color: #858585; }
.pbody { flex: 1; display: flex; border-top: 1px solid #222; min-height: 0; }
.favs { width: 199px; background: #383838; border-right: 1px solid #222; flex: none; }
.fav { height: 16px; display: flex; align-items: center; color: #c8c8c8; letter-spacing: .1px; }
.fav .ar { margin: 0 4px 0 -5px; }
.fav b { margin-left: 5px; }
.fav.sub { padding-left: 23px; }
.fm { width: 12px; height: 12px; color: #999; margin-right: 4px; }
.assets { flex: 1; background: #333; }
.crumbs { height: 21px; background: #404040; display: flex; align-items: center; gap: 7px; padding: 0 0 2px 5px; color: #b0b0b0; }
.crumbs b { color: #c4c4c4; }
.asset { height: 18px; display: flex; align-items: center; gap: 4px; padding-left: 17px; letter-spacing: .15px; }

.inspector { width: 599px; background: #383838; overflow: hidden; display: flex; flex-direction: column; border-radius: 3px 3px 0 0; }
.inspector .tabtools { padding-right: 4px; }
.ohead { height: 59px; flex: none; background: #3c3c3c; display: flex; }
.bigcube { width: 41px; padding: 11px 0 0 7px; }
.bigcube > svg:first-child { color: #c4c4c4; }
.bigcube .i-drop { margin: -1px 0 0 19px; }
.olines { flex: 1; padding-top: 9px; min-width: 0; }
.oline { height: 18px; display: flex; align-items: center; }
.cb { width: 14px; height: 14px; background: #2a2a2a; border: 1px solid #212121; border-top-color: #0f0f0f; border-radius: 2px; flex: none; display: flex; align-items: center; justify-content: center; }
.cb svg { width: 10px; height: 10px; color: #eee; }
.c1 { margin: 0 6px 0 6px; }
.field { height: 18px; background: #2a2a2a; border: 1px solid #212121; border-top-color: #0f0f0f; border-radius: 3px; padding-left: 3px; color: #d2d2d2; line-height: 18px; flex: none; }
.name { width: 460px; margin-right: 3px; font-weight: 500; }
.st { margin-left: 4px; width: 48px; flex: none; color: #b4b4b4; }
.l2 { margin-top: 6px; color: #b4b4b4; }
.l2 label { width: 26px; flex: none; padding-top: 2px; }
.dd { height: 17px; background: #515151; border: 1px solid #303030; border-bottom-color: #242424; border-radius: 3px; display: flex; align-items: center; padding-left: 3px; flex: none; color: #e0e0e0; }
.dd .i-drop { margin-left: auto; margin-right: 5px; }
.tag { width: 248px; }
.l2 label.lay { margin-left: 13px; width: 37px; }
.layer { width: 240px; }

.chead { height: 21px; flex: none; border-top: 1px solid #1c1c1c; background: #3e3e3e; border-bottom: 1px solid #303030; display: flex; align-items: center; padding: 1px 0 0 4px; }
.chead .cic { margin-left: 5px; margin-right: 25px; }
.chead .nav { margin-right: 4px; }
.chead .c2 { margin-right: 6px; }
.chead b { padding-top: 1px; }
.cright { margin-left: auto; display: flex; align-items: center; gap: 10px; padding-right: 4px; }
.xform { height: 72px; flex: none; padding-top: 5px; }
.vec { height: 20px; display: flex; align-items: center; padding-left: 19px; color: #bdbdbd; }
.vec label { width: 212px; flex: none; }
.vec em { width: 23px; flex: none; }
.vec s { text-decoration: none; width: 14px; flex: none; }
.vec .field { width: 99px; margin-right: 5px; }
.agent { width: 599px; height: 87px; }
.agent text { font: 12px Inter, sans-serif; fill: #c8c8c8; }
.props { flex: none; }
.p { height: 20px; flex: none; display: flex; align-items: center; padding-left: 19px; color: #bdbdbd; }
.p label { width: 235px; flex: none; }
.p .field { width: 360px; margin-left: -1px; }
.p .dd { width: 351px; height: 18px; padding-bottom: 1px; }
.p .cb { margin: 0 0 2px -1px; }
.fold { padding-left: 5px; color: #c4c4c4; }
.fold .ar { margin: 0 3.500px 0 .500px; }
.in1 { padding-left: 34px; }
.in1 label { width: 220px; }
.in2 { padding-left: 49px; }
.in2 label { width: 205px; }
.in2 label, .in2 .field { color: #7c7c7c; }
.in2 .field { background: #303030; border-color: #2a2a2a; border-top-color: #222; }
.adv { margin-top: 6px; }
small { font-size: 10.300px; color: #8a8a8a; letter-spacing: 0; padding-left: 1px; }
.warn { margin: 14px 0 0 18px; width: 600px; height: 38px; flex: none; border: 1px solid #262626; border-radius: 3px; background: #404040; display: flex; align-items: center; padding-left: 4px; gap: 5px; }
.warn p { margin: 0; font-size: 10.170px; line-height: 12px; white-space: pre; color: #bdbdbd; }
.button { background: #585858; border: 1px solid #303030; border-bottom-color: #242424; border-radius: 3px; color: #e6e6e6; text-align: center; position: relative; flex: none; }
.b-open { margin: 2px 0 0 252px; flex: none; }
.b-open .button { width: 351px; height: 18px; line-height: 16px; }
.data { margin-top: 10px; }
.p .obj { display: flex; align-items: center; background: #303030; border-color: #2a2a2a; color: #888; gap: 2px; width: 347px; }
.pick { width: 11px; height: 11px; margin-left: auto; margin-right: 0; }
.b-pair { margin-left: 252px; display: flex; gap: 4px; height: 18px; flex: none; }
.b-pair .button { width: 173px; height: 18px; line-height: 17px; }
.b-pair .button + .button { width: 170px; border-right: 0; border-radius: 3px 0 0 3px; }
.mark-bake { left: 51px; top: -8px; width: 68px; height: 37px; }
.foot { margin-top: 10px; border-top: 1px solid #1c1c1c; padding: 8px 0 0 189px; flex: none; }
.foot .button { width: 229px; height: 24px; line-height: 23px; }
```
